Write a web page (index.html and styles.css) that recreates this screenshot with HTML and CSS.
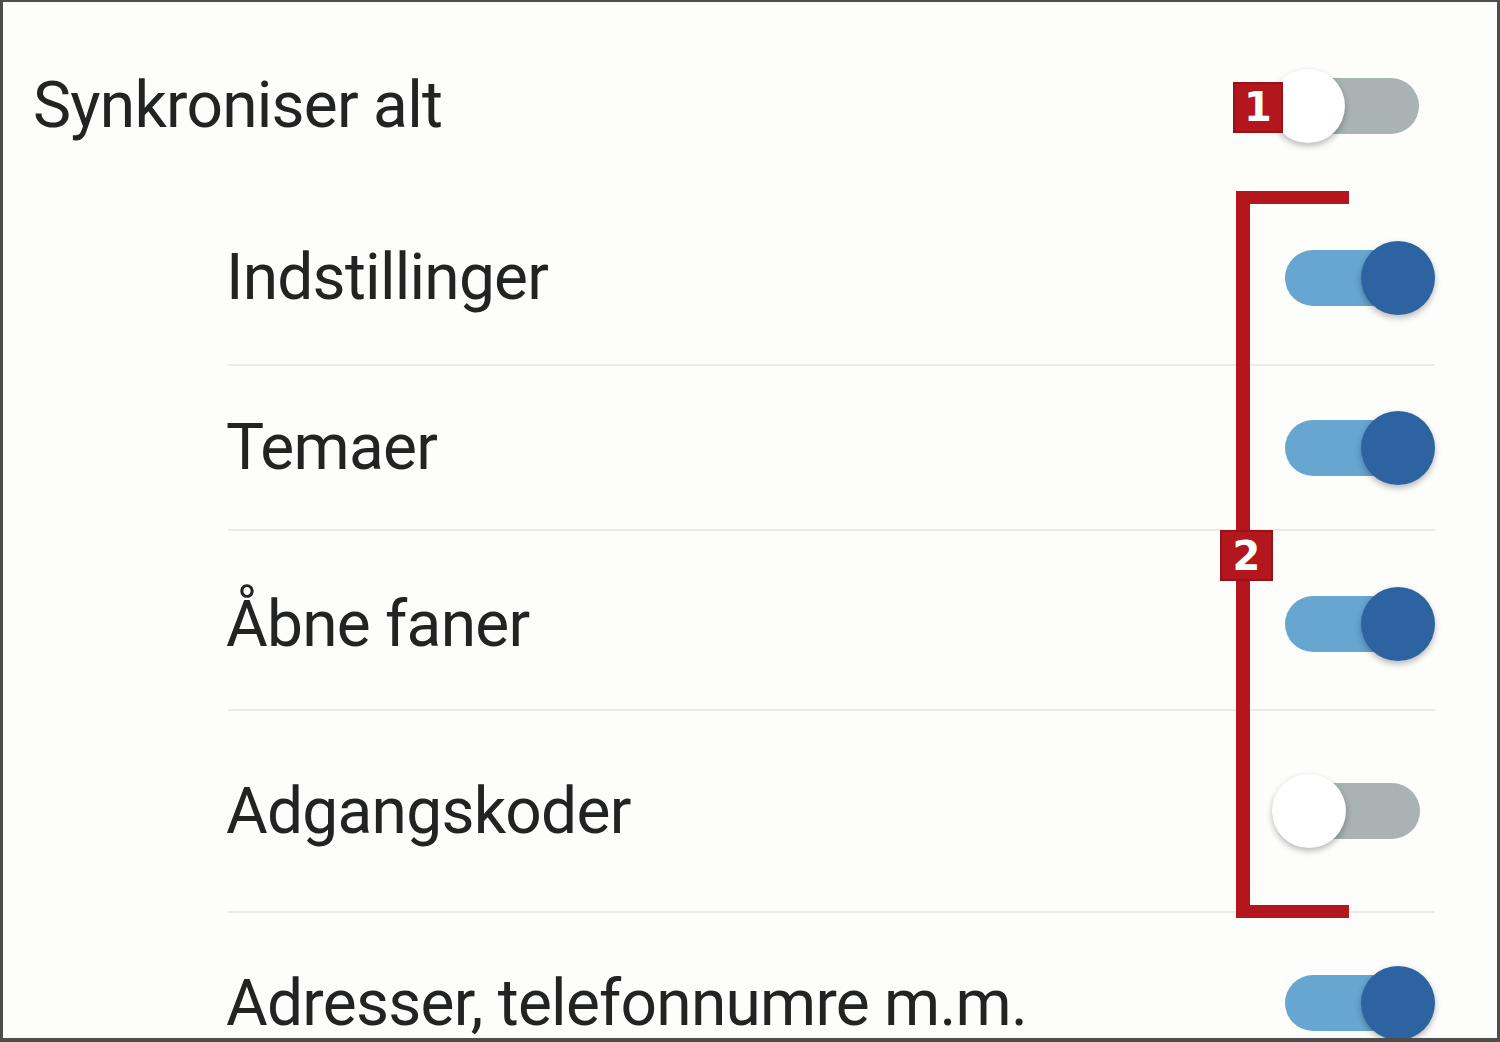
FILE: index.html
```html
<!DOCTYPE html>
<html lang="da">
<head>
    <meta charset="UTF-8">
    <meta name="viewport" content="width=device-width, initial-scale=1.0">
    <title>Synkronisering</title>
    <link rel="stylesheet" href="styles.css">
</head>
<body>
    <div class="screen">
        <div class="row row-main">
            <span class="label">Synkroniser alt</span>
            <div class="switch">
                <span class="track"></span>
                <span class="knob"></span>
                <span class="badge badge-one">1</span>
            </div>
        </div>
        <div class="list">
            <div class="row row-sub">
                <span class="label">Indstillinger</span>
                <div class="switch on"><span class="track"></span><span class="knob"></span></div>
            </div>
            <div class="row row-sub">
                <span class="label">Temaer</span>
                <div class="switch on"><span class="track"></span><span class="knob"></span></div>
            </div>
            <div class="row row-sub">
                <span class="label">Åbne faner</span>
                <div class="switch on"><span class="track"></span><span class="knob"></span></div>
            </div>
            <div class="row row-sub">
                <span class="label">Adgangskoder</span>
                <div class="switch"><span class="track"></span><span class="knob"></span></div>
            </div>
            <div class="row row-sub">
                <span class="label">Adresser, telefonnumre m.m.</span>
                <div class="switch on"><span class="track"></span><span class="knob"></span></div>
            </div>
        </div>
        <div class="bracket"><span class="badge badge-two">2</span></div>
    </div>
</body>
</html>
```

FILE: styles.css
```css
* {
    margin: 0;
    padding: 0;
    box-sizing: border-box;
}
body {
    background: #fdfdfb;
    font-family: Roboto, "Liberation Sans", sans-serif;
}
.screen {
    position: relative;
    width: 1500px;
    height: 1042px;
    border: 3px solid #4d4d4d;
    border-top-width: 2px;
    border-bottom-width: 4px;
    background: #fdfdfb;
    overflow: hidden;
}
.row {
    display: flex;
    align-items: center;
    justify-content: space-between;
}
.label {
    font-size: 64px;
    color: #222424;
    letter-spacing: -0.75px;
}
.row-main {
    height: 189px;
    padding: 18px 63px 0 30px;
}
.list {
    margin-left: 225px;
    margin-right: 62px;
}
.row-sub {
    border-bottom: 2px solid #e9ebe6;
}
.row-sub .label {
    margin-left: -2px;
}
.row-sub:nth-child(1) { height: 175px; }
.row-sub:nth-child(2) { height: 165px; }
.row-sub:nth-child(3) { height: 180px; padding-top: 8px; }
.row-sub:nth-child(4) { height: 202px; }
.row-sub:nth-child(5) { height: 180px; border-bottom: none; }

/* switch */
.switch {
    position: relative;
    width: 163px;
    height: 74px;
    flex-shrink: 0;
}
.track {
    position: absolute;
    left: 13px;
    right: 15px;
    top: 9px;
    height: 56px;
    border-radius: 28px;
    background: #a9b3b3;
}
.knob {
    position: absolute;
    top: 0;
    left: 0;
    width: 74px;
    height: 74px;
    border-radius: 50%;
    background: #ffffff;
    box-shadow: 0 3px 6px rgba(0, 0, 0, 0.28);
}
.switch.on .track {
    background: #66a6d1;
}
.switch.on .knob {
    left: auto;
    right: 0;
    background: #2e63a2;
}

/* markers */
.badge {
    position: absolute;
    display: flex;
    align-items: center;
    justify-content: center;
    background: #b3161d;
    border: 2px solid #98121a;
    color: #ffffff;
    font-family: "DejaVu Sans", sans-serif;
    font-weight: bold;
    font-size: 40px;
    line-height: 1;
    z-index: 2;
}
.badge-one {
    left: -38px;
    top: 13px;
    width: 50px;
    height: 51px;
}
.bracket {
    position: absolute;
    left: 1233px;
    top: 189px;
    width: 113px;
    height: 727px;
    border: 13px solid #b3161d;
    border-left-width: 14px;
    border-right: none;
}
.badge-two {
    left: -30px;
    top: 326px;
    width: 53px;
    height: 51px;
}
```
